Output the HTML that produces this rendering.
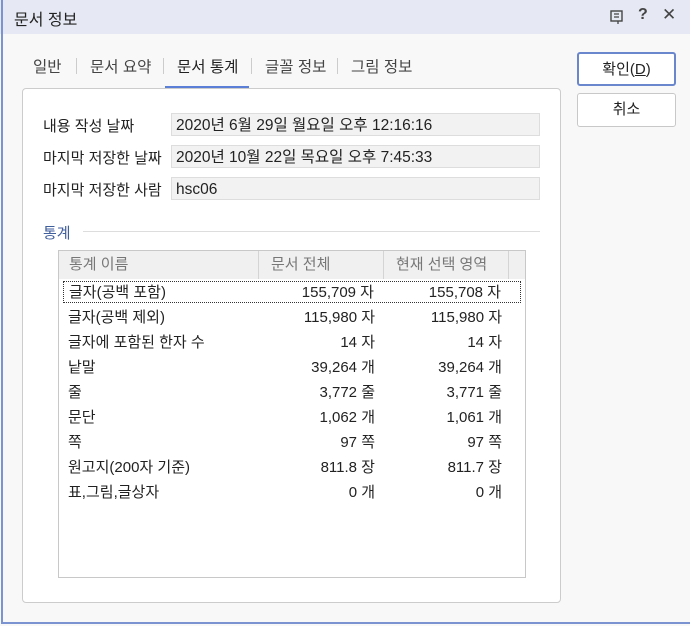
<!DOCTYPE html><html><head><meta charset="utf-8"><style>
*{margin:0;padding:0;box-sizing:border-box}
body{width:690px;height:626px;overflow:hidden;background:#f8f8f8;font-family:"Liberation Sans","Noto Sans CJK KR",sans-serif;font-size:15px;color:#222;position:relative}
.abs{position:absolute}
.title{left:0;top:0;width:690px;height:34px;background:#e6e9f4;}
.win{left:1px;top:0;width:700px;height:624px;border-left:2px solid #7b93d0;border-bottom:2px solid #7b93d0}
.panel{left:22px;top:88px;width:539px;height:515px;background:#fff;border:1px solid #ccc;border-radius:4px}
.lbl{left:43px;font-size:15px}
.inp{left:171px;width:369px;height:23px;background:#f2f2f2;border:1px solid #ddd;padding-left:4px;padding-top:2px;line-height:19px;font-size:15.5px}
.btn{left:577px;width:99px;height:34px;background:#fff;border:1px solid #c8c8c8;border-radius:3px;text-align:center;line-height:32px;font-size:15px}
.tab{top:55px;font-size:15.5px;color:#444}
.sep{top:58px;width:1px;height:16px;background:#ccc}
.tbl{left:58px;top:250px;width:468px;height:328px;border:1px solid #c8c8c8;background:#fff}
.hd{left:0;top:0;width:466px;height:28px;background:#f0f0f0;color:#777;font-size:15px;line-height:27px}
.row{left:4px;width:458px;height:25px;line-height:21px;font-size:15px}
.row span{position:absolute}
.a{left:5px}.b{right:146px}.c{right:19px}
</style></head><body>
<div class="abs title"></div>
<div class="abs win"></div>
<div class="abs" style="left:14px;top:6px;font-size:16px">문서 정보</div>
<svg class="abs" style="left:609px;top:9px" width="16" height="16"><rect x="2" y="2" width="11" height="10" fill="none" stroke="#444" stroke-width="1.4"/><path d="M5 5h5M5 8h5M9 12v3" stroke="#444" stroke-width="1.3"/></svg>
<div class="abs" style="left:638px;top:6px;font-size:16px;color:#444;font-weight:bold">?</div>
<div class="abs" style="left:662px;top:5px;font-size:17px;color:#444">✕</div>
<div class="abs tab" style="left:33px">일반</div>
<div class="abs sep" style="left:76px"></div>
<div class="abs tab" style="left:90px">문서 요약</div>
<div class="abs sep" style="left:163px"></div>
<div class="abs tab" style="left:177px;color:#222">문서 통계</div>
<div class="abs" style="left:165px;top:86px;width:84px;height:3px;background:#5b7fd6"></div>
<div class="abs sep" style="left:251px"></div>
<div class="abs tab" style="left:265px">글꼴 정보</div>
<div class="abs sep" style="left:337px"></div>
<div class="abs tab" style="left:351px">그림 정보</div>
<div class="abs btn" style="top:52px;border:2px solid #6a86cc">확인(<u>D</u>)</div>
<div class="abs btn" style="top:93px">취소</div>
<div class="abs panel"></div>
<div class="abs lbl" style="top:115px">내용 작성 날짜</div>
<div class="abs inp" style="top:113px">2020년 6월 29일 월요일 오후 12:16:16</div>
<div class="abs lbl" style="top:147px">마지막 저장한 날짜</div>
<div class="abs inp" style="top:145px">2020년 10월 22일 목요일 오후 7:45:33</div>
<div class="abs lbl" style="top:179px">마지막 저장한 사람</div>
<div class="abs inp" style="top:177px">hsc06</div>
<div class="abs" style="left:43px;top:222px;color:#3f5e9c;font-size:15px">통계</div>
<div class="abs" style="left:83px;top:231px;width:457px;height:1px;background:#ddd"></div>
<div class="abs tbl">
<div class="abs hd"><span class="abs" style="left:10px">통계 이름</span><span class="abs" style="left:212px">문서 전체</span><span class="abs" style="left:337px">현재 선택 영역</span>
<div class="abs" style="left:199px;top:0;width:1px;height:28px;background:#d4d4d4"></div><div class="abs" style="left:324px;top:0;width:1px;height:28px;background:#d4d4d4"></div><div class="abs" style="left:449px;top:0;width:1px;height:28px;background:#d4d4d4"></div></div>
<div class="abs row" style="top:30px;height:22px;border:1px dotted #333"><span class="a">글자(공백 포함)</span><span class="b">155,709 자</span><span class="c">155,708 자</span></div>
<div class="abs row" style="top:56px"><span class="a">글자(공백 제외)</span><span class="b">115,980 자</span><span class="c">115,980 자</span></div>
<div class="abs row" style="top:81px"><span class="a">글자에 포함된 한자 수</span><span class="b">14 자</span><span class="c">14 자</span></div>
<div class="abs row" style="top:106px"><span class="a">낱말</span><span class="b">39,264 개</span><span class="c">39,264 개</span></div>
<div class="abs row" style="top:131px"><span class="a">줄</span><span class="b">3,772 줄</span><span class="c">3,771 줄</span></div>
<div class="abs row" style="top:156px"><span class="a">문단</span><span class="b">1,062 개</span><span class="c">1,061 개</span></div>
<div class="abs row" style="top:181px"><span class="a">쪽</span><span class="b">97 쪽</span><span class="c">97 쪽</span></div>
<div class="abs row" style="top:206px"><span class="a">원고지(200자 기준)</span><span class="b">811.8 장</span><span class="c">811.7 장</span></div>
<div class="abs row" style="top:231px"><span class="a">표,그림,글상자</span><span class="b">0 개</span><span class="c">0 개</span></div>
</div>
</body></html>
